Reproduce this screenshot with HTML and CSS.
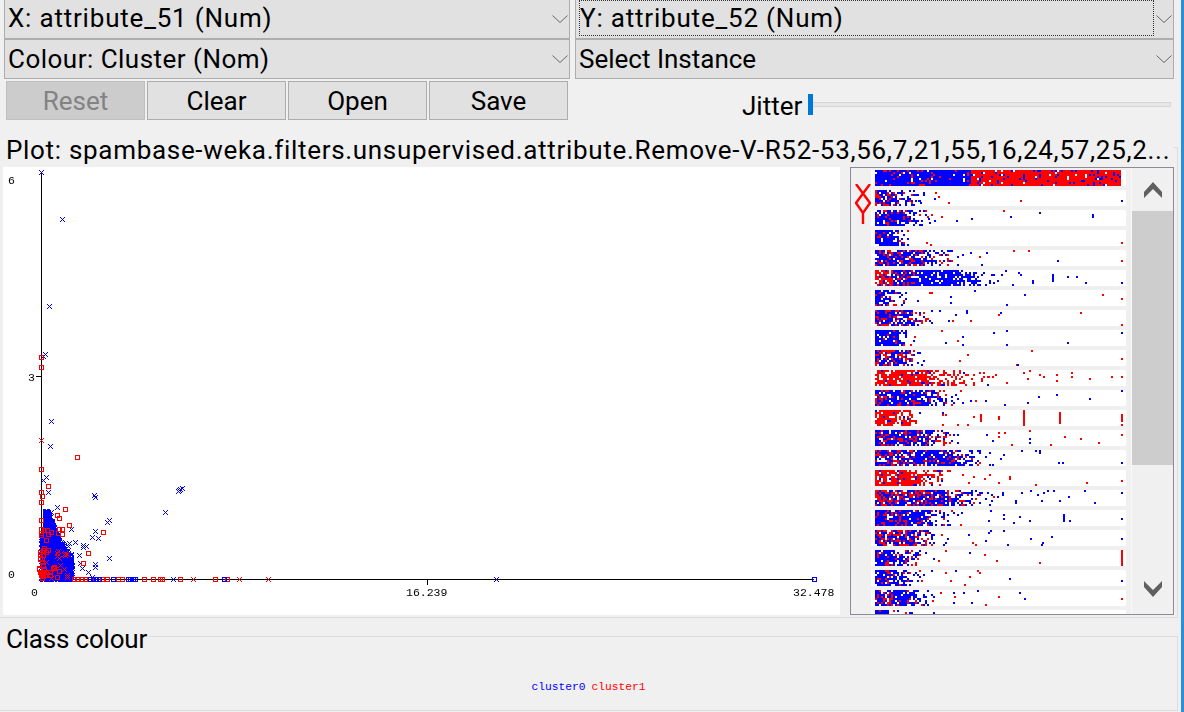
FILE: index.html
```html
<!DOCTYPE html>
<html lang="en">
<head>
  <meta charset="UTF-8">
  <title>Weka Visualize</title>
  <link rel="stylesheet" href="styles.css">
</head>
<body>
  <div class="window">
    <div class="controls">
      <div class="control-col">
        <div class="combo combo-first">
          <span class="combo-text spaced-num">X: attribute_51 (Num)</span>
          <svg class="combo-arrow" width="16" height="8" viewBox="0 0 16 8"><polyline points="0.5,0.5 8,7.5 15.5,0.5"/></svg>
        </div>
        <div class="combo">
          <span class="combo-text spaced-nom">Colour: Cluster (Nom)</span>
          <svg class="combo-arrow" width="16" height="8" viewBox="0 0 16 8"><polyline points="0.5,0.5 8,7.5 15.5,0.5"/></svg>
        </div>
        <div class="buttons">
          <button type="button" class="btn" disabled>Reset</button>
          <button type="button" class="btn">Clear</button>
          <button type="button" class="btn">Open</button>
          <button type="button" class="btn">Save</button>
        </div>
      </div>
      <div class="control-col">
        <div class="combo combo-first">
          <span class="combo-text combo-focus spaced-num">Y: attribute_52 (Num)</span>
          <svg class="combo-arrow" width="16" height="8" viewBox="0 0 16 8"><polyline points="0.5,0.5 8,7.5 15.5,0.5"/></svg>
        </div>
        <div class="combo">
          <span class="combo-text">Select Instance</span>
          <svg class="combo-arrow" width="16" height="8" viewBox="0 0 16 8"><polyline points="0.5,0.5 8,7.5 15.5,0.5"/></svg>
        </div>
        <div class="jitter">
          <span class="jitter-label">Jitter</span>
          <div class="slider">
            <div class="slider-thumb"></div>
            <div class="slider-track"></div>
          </div>
        </div>
      </div>
    </div>

    <div class="plot-box">
      <div class="box-label plot-title">Plot: spambase-weka.filters.unsupervised.attribute.Remove-V-R52-53,56,7,21,55,16,24,57,25,2...</div>
      <div class="plot-row">
        <div class="plot">
          <canvas id="scatter" width="837" height="448"></canvas>
          <span class="tick tick-y6">6</span>
          <span class="tick tick-y3">3</span>
          <span class="tick tick-y0">0</span>
          <span class="tick tick-x0">0</span>
          <span class="tick tick-xmid">16.239</span>
          <span class="tick tick-xmax">32.478</span>
        </div>
        <div class="attr-panel">
          <svg class="xy-mark" width="16" height="42" viewBox="0 0 16 42">
            <polyline points="1,0 15,19 8,29 1,19 15,0"/>
            <polyline points="8,29 8,40"/>
          </svg>
          <canvas id="attrs" width="255" height="446"></canvas>
          <div class="scrollbar">
            <div class="scroll-btn">
              <svg width="18" height="16" viewBox="0 0 18 16"><polygon points="0,10 9,0 18,10 18,16 9,7 0,16"/></svg>
            </div>
            <div class="scroll-thumb"></div>
            <div class="scroll-btn scroll-btn-down">
              <svg width="18" height="16" viewBox="0 0 18 16"><polygon points="0,0 9,9 18,0 18,6 9,16 0,6"/></svg>
            </div>
          </div>
        </div>
      </div>
    </div>

    <div class="class-box">
      <div class="box-label class-title">Class colour</div>
      <div class="legend">
        <span class="legend-blue">cluster0</span>
        <span class="legend-red">cluster1</span>
      </div>
    </div>
  </div>
  <script src="script.js"></script>
</body>
</html>
```

FILE: styles.css
```css
body {
  margin: 0;
  background-color: #f0f0f0;
  font-family: 'Roboto', 'Liberation Sans', sans-serif;
  font-size: 26px;
  color: #000;
  overflow: hidden;
}

.window {
  width: 1178px;
  height: 712px;
  position: relative;
}

.window::after {
  content: '';
  position: absolute;
  top: 0;
  right: -6px;
  width: 3px;
  height: 712px;
  background-color: #2b8fdc;
}

.controls {
  display: grid;
  grid-template-columns: 566px 599px;
  column-gap: 5px;
  padding-left: 4px;
  height: 120px;
}

.control-col {
  display: flex;
  flex-direction: column;
}

.combo {
  height: 40px;
  box-sizing: border-box;
  display: flex;
  align-items: center;
  background-color: #e1e1e1;
  border: 1px solid #adadad;
  padding-left: 3px;
  padding-right: 1px;
}

.combo-first {
  height: 39px;
  border-top: none;
  align-items: flex-start;
}

.combo-text {
  flex: 1;
  line-height: 36px;
  white-space: nowrap;
}

.spaced-num {
  letter-spacing: 0.8px;
}

.spaced-nom {
  letter-spacing: 0.48px;
}

.combo-focus {
  border: 1px dotted #333;
  height: 34px;
  line-height: 34px;
  margin-right: 0;
}

.combo-arrow {
  flex: none;
  margin-left: 2px;
  fill: none;
  stroke: #666;
  stroke-width: 1;
}

.combo-first .combo-arrow {
  margin-top: 15px;
}

.buttons {
  display: flex;
  gap: 2px;
  margin-top: 2px;
  padding-left: 2px;
}

.btn {
  width: 139px;
  height: 39px;
  padding: 0;
  background-color: #e1e1e1;
  border: 1px solid #adadad;
  font: inherit;
  color: #000;
}

.btn:disabled {
  background-color: #cccccc;
  border-color: #bfbfbf;
  color: #838383;
}

.jitter {
  display: flex;
  align-items: center;
  height: 41px;
  padding-left: 167px;
}

.jitter-label {
  width: 66px;
  padding-top: 12px;
}

.slider {
  display: flex;
  align-items: center;
  height: 21px;
  margin-top: 10px;
}

.slider-thumb {
  width: 5px;
  height: 21px;
  background-color: #0078d7;
}

.slider-track {
  width: 357px;
  height: 3px;
  background-color: #e7e7e7;
  border: 1px solid #d6d6d6;
  border-left: none;
}

.plot-box {
  margin-top: 27px;
  height: 471px;
  box-sizing: border-box;
  border-top: 1px solid #dcdcdc;
  border-right: 1px solid #dcdcdc;
  border-bottom: 1px solid #dcdcdc;
}

.box-label {
  background-color: #f0f0f0;
  width: max-content;
  height: 34px;
  line-height: 34px;
  padding-left: 6px;
  white-space: nowrap;
}

.plot-title {
  margin-top: -15px;
  padding-right: 4px;
  letter-spacing: 0.69px;
}

.plot-row {
  display: flex;
  gap: 10px;
  padding-left: 3px;
}

.plot {
  position: relative;
  width: 837px;
  height: 448px;
  background-color: #fff;
}

canvas {
  display: block;
}

.tick {
  position: absolute;
  font-family: 'Liberation Mono', monospace;
  font-size: 11.5px;
  line-height: 12px;
  color: #000;
}

.tick-y6 { left: 5px; top: 8px; }
.tick-y3 { left: 25px; top: 205px; }
.tick-y0 { left: 5px; top: 402px; }
.tick-x0 { left: 28px; top: 420px; }
.tick-xmid { left: 403px; top: 420px; }
.tick-xmax { left: 790px; top: 420px; }

.attr-panel {
  position: relative;
  box-sizing: border-box;
  width: 324px;
  height: 448px;
  display: flex;
  border: 1px solid #8a8a99;
  padding-left: 20px;
}

.xy-mark {
  position: absolute;
  left: 4px;
  top: 16px;
  fill: none;
  stroke: #ff0000;
  stroke-width: 2.4;
}

.scrollbar {
  width: 42px;
  margin-left: 5px;
  display: flex;
  flex-direction: column;
  border-left: 1px solid #f8f8f8;
  box-sizing: border-box;
}

.scroll-btn {
  height: 43px;
  display: flex;
  justify-content: center;
  align-items: center;
  fill: #606060;
}

.scroll-btn-down {
  height: 56px;
  margin-top: auto;
  padding-top: 6px;
  box-sizing: border-box;
}

.scroll-thumb {
  height: 254px;
  background-color: #cdcdcd;
}

.class-box {
  margin-top: 18px;
  height: 75px;
  box-sizing: border-box;
  border-top: 1px solid #dcdcdc;
  border-right: 1px solid #dcdcdc;
  border-bottom: 1px solid #dcdcdc;
}

.class-title {
  margin-top: -15px;
  padding-right: 2px;
  letter-spacing: -0.2px;
}

.legend {
  display: flex;
  justify-content: center;
  gap: 6px;
  margin-top: 24px;
  font-family: 'Liberation Mono', monospace;
  font-size: 11.25px;
  line-height: 14px;
}

.legend-blue { color: #0000ff; }
.legend-red { color: #ff0000; }
```

FILE: script.js
```js
// small seeded random so the points stay put between runs
var seed = 51;
function rnd() {
  seed = (seed * 1664525 + 1013904223) % 4294967296;
  return seed / 4294967296;
}

var BLUE = '#0000ff';
var RED = '#ff0000';

// ---- main scatter plot ----
var sc = document.getElementById('scatter').getContext('2d');
var OX = 3, OY = 167;

function px(ctx, x, y, w, h) {
  ctx.fillRect(Math.round(x), Math.round(y), w || 1, h || 1);
}

function cross(x, y, col) {
  x = Math.round(x - OX);
  y = Math.round(y - OY);
  sc.fillStyle = col;
  for (var i = -2; i <= 2; i++) {
    px(sc, x + i, y + i);
    px(sc, x + i, y - i);
  }
}

function square(x, y, col) {
  x = Math.round(x - OX) - 2;
  y = Math.round(y - OY) - 2;
  sc.fillStyle = col;
  px(sc, x, y, 5, 1);
  px(sc, x, y + 4, 5, 1);
  px(sc, x, y, 1, 5);
  px(sc, x + 4, y, 1, 5);
}

// axes
sc.fillStyle = '#000';
px(sc, 41 - OX, 172 - OY, 1, 408);
px(sc, 41 - OX, 579 - OY, 773, 1);
px(sc, 36 - OX, 376 - OY, 5, 1);
px(sc, 427 - OX, 579 - OY, 1, 6);

// right edge of the dense cloud at a given y
function cloudRight(y) {
  if (y > 553) return 72;
  if (y > 540) return 60 + (y - 540) * 0.9;
  if (y > 522) return 52 + (y - 522) * 0.44;
  return 47 + (y - 510) * 0.42;
}

// dense cloud by the origin
for (var i = 0; i < 1300; i++) {
  var y = 579 - Math.pow(rnd(), 1.5) * 68;
  var left = y > 535 ? 41 : 45;
  cross(left + Math.pow(rnd(), 1.1) * (cloudRight(y) - left), y, BLUE);
}
for (var i = 0; i < 18; i++) {
  cross(43 + rnd() * 24, 550 + rnd() * 28, RED);
}
for (var i = 0; i < 26; i++) {
  square(39 + rnd() * 6, 547 + rnd() * 32, RED);
}
for (var i = 0; i < 8; i++) {
  square(44 + rnd() * 16, 550 + rnd() * 28, RED);
}
[[41, 529], [44, 530], [47, 530], [51, 532], [59, 529], [62, 529], [58, 533], [62, 534], [48, 534], [41, 535], [41, 533], [46, 540]].forEach(function (p) {
  square(p[0], p[1], RED);
});

// points read off the plot
[[41, 172], [62, 219], [49, 306], [45, 354], [43, 356], [51, 421], [50, 446], [46, 477], [43, 480], [48, 492],
 [94, 495], [95, 497], [180, 489], [182, 488], [178, 491], [179, 490], [165, 512], [57, 507], [51, 512], [49, 516],
 [107, 522], [109, 520], [71, 529], [95, 531], [92, 537], [98, 538], [75, 542], [69, 543], [68, 546], [83, 545],
 [86, 546], [83, 547], [79, 555], [109, 558], [95, 564], [95, 567], [80, 563], [82, 568], [88, 572], [92, 577]
].forEach(function (p) {
  cross(p[0], p[1], BLUE);
});
cross(41, 440, RED);
[[41, 357], [41, 367], [77, 457], [41, 469], [48, 486], [41, 492], [42, 496], [41, 502], [65, 509], [57, 515],
 [59, 518], [41, 520], [69, 525], [103, 532], [88, 553], [83, 563]
].forEach(function (p) {
  square(p[0], p[1], RED);
});

// points lying on the x axis
[74, 77, 82, 85, 95, 102, 107, 118, 122, 144, 153, 160, 162, 180, 215, 227].forEach(function (x) {
  square(x, 579, RED);
});
[90, 93, 96, 99, 113, 128, 130, 133, 135, 224, 814].forEach(function (x) {
  square(x, 579, BLUE);
});
[173, 268, 496].forEach(function (x) {
  cross(x, 579, BLUE);
});
[193, 239, 268].forEach(function (x) {
  cross(x, 579, RED);
});

// ---- attribute bars ----
var at = document.getElementById('attrs').getContext('2d');
var AX = 871, AY = 168;
var ROW_H = 16, ROW_GAP = 20;

// dense: end of the solid part, tail: end of the thinning part
// red0/red1: share of red at the start and end of those parts
var rows = [
  { dense: 1121, tail: 1121, red0: 0.12, red1: 0.9, flip: 970, fill: 0.96 },
  { dense: 890, tail: 925, red0: 0.25, red1: 0.25, r: [1020, 948, 938, 935], b: [1121, 934, 918, 920] },
  { dense: 905, tail: 940, red0: 0.18, red1: 0.2, r: [1003, 941], b: [1010, 1039, 1092, 1092, 934, 956, 971, 925, 928] },
  { dense: 893, tail: 912, red0: 0.08, red1: 0.1, r: [1121, 926, 930], b: [] },
  { dense: 915, tail: 965, red0: 0.3, red1: 0.35, r: [979, 1013, 1028, 1121], b: [1057, 986, 981, 970, 962] },
  { dense: 955, tail: 1005, red0: 0.75, red1: 0, flip2: 892, r: [], b: [1121, 1085, 1076, 1067, 1032, 1032, 1020, 1020, 1018, 1012, 1005, 1001], bars: [[1052, BLUE, 8]] },
  { dense: 884, tail: 910, red0: 0.25, red1: 0.1, r: [1102, 1121, 929, 931], b: [1024, 1006, 974, 974, 950, 950, 917] },
  { dense: 902, tail: 940, red0: 0.2, red1: 0.35, r: [1121, 1121, 1080, 998, 970, 952], b: [1000, 966, 966, 955, 948] },
  { dense: 895, tail: 915, red0: 0.04, red1: 0.2, r: [957, 941, 914, 910], b: [1121, 1067, 1006, 1006, 993, 962, 962, 945] },
  { dense: 902, tail: 930, red0: 0.35, red1: 0.3, r: [1121, 1031, 1016, 967, 959], b: [1017] },
  { dense: 925, tail: 990, red0: 0.93, red1: 0.9, r: [1121, 1111, 1089, 1071, 1071, 1056, 1056, 1043, 1039, 1029, 1027, 1023, 1006, 992, 995, 988], b: [] },
  { dense: 925, tail: 965, red0: 0.35, red1: 0.05, r: [975, 960], b: [1121, 1089, 1056, 1038, 1027, 1004, 985, 970, 962] },
  { dense: 893, tail: 925, red0: 0.93, red1: 0.9, r: [1121, 967, 973, 957, 942, 942, 945], b: [942], bars: [[1121, RED, 8], [1059, RED, 12], [1023, RED, 16], [998, RED, 4], [980, RED, 8]] },
  { dense: 925, tail: 960, red0: 0.25, red1: 0.3, r: [1121, 1098, 1080, 1064, 1050, 1029, 1011, 1004, 998, 998], b: [1029, 1029, 992, 986] },
  { dense: 950, tail: 995, red0: 0.45, red1: 0.02, r: [], b: [1121, 1062, 1058, 1039, 1039, 1035, 1021, 1003, 1000, 992] },
  { dense: 910, tail: 955, red0: 0.9, red1: 0.85, r: [1121, 1086, 1035, 998, 989, 984, 973, 968, 962], b: [], bars: [[1009, RED, 4]] },
  { dense: 945, tail: 1000, red0: 0.55, red1: 0.1, r: [], b: [1121, 1094, 1084, 1068, 1059, 1053, 1047, 1041, 1043, 1037, 1030, 1021, 1015, 1015, 1002, 1002] },
  { dense: 918, tail: 965, red0: 0.25, red1: 0.08, r: [951, 960], b: [1121, 1069, 1029, 1019, 1013, 1003, 1003, 988, 990], bars: [[1063, BLUE, 8]] },
  { dense: 912, tail: 950, red0: 0.5, red1: 0.2, r: [975, 972], b: [1121, 1051, 1042, 1041, 1030, 1007, 1003, 990, 988, 985, 968] },
  { dense: 895, tail: 930, red0: 0.06, red1: 0.45, r: [1039, 996, 984, 945, 938], b: [969, 933], bars: [[1121, RED, 16]] },
  { dense: 890, tail: 935, red0: 0.12, red1: 0.35, r: [979, 977, 964, 969, 945, 950], b: [1121, 1009, 955] },
  { dense: 908, tail: 935, red0: 0.25, red1: 0.15, r: [1121, 998, 985, 954, 940, 932], b: [1024, 1019, 977, 971, 963, 953, 953] },
  { dense: 885, tail: 920, red0: 0.25, red1: 0.2, r: [947], b: [933, 918, 914] }
];

function dot(x, y, col) {
  at.fillStyle = col;
  at.fillRect(x - AX, y - AY, 2, 2);
}

rows.forEach(function (row, i) {
  var top = 170 + i * ROW_GAP;
  at.fillStyle = '#fff';
  at.fillRect(0, top - AY, 255, ROW_H);

  var fill = row.fill || 0.86;
  for (var x = 875; x < row.tail; x += 2) {
    for (var k = 0; k < 8; k++) {
      var on, t;
      if (x < row.dense) {
        on = fill;
      } else {
        t = (x - row.dense) / (row.tail - row.dense);
        on = 0.7 * Math.pow(1 - t, 1.5) + 0.04;
      }
      if (rnd() > on) continue;
      var share;
      if (row.flip) {
        share = x < row.flip ? row.red0 : row.red1;
      } else if (row.flip2) {
        share = x < row.flip2 ? row.red0 : (x < 915 ? 0.2 : row.red1);
      } else {
        share = row.red0 + (row.red1 - row.red0) * (x - 875) / (row.tail - 875);
      }
      dot(x, top + k * 2, rnd() < share ? RED : BLUE);
    }
  }

  (row.r || []).forEach(function (x) {
    dot(x, top + Math.floor(rnd() * 8) * 2, RED);
  });
  (row.b || []).forEach(function (x) {
    dot(x, top + Math.floor(rnd() * 8) * 2, BLUE);
  });
  (row.bars || []).forEach(function (b) {
    at.fillStyle = b[1];
    at.fillRect(b[0] - AX, top - AY + Math.floor((ROW_H - b[2]) / 2), 2, b[2]);
  });
});
```
